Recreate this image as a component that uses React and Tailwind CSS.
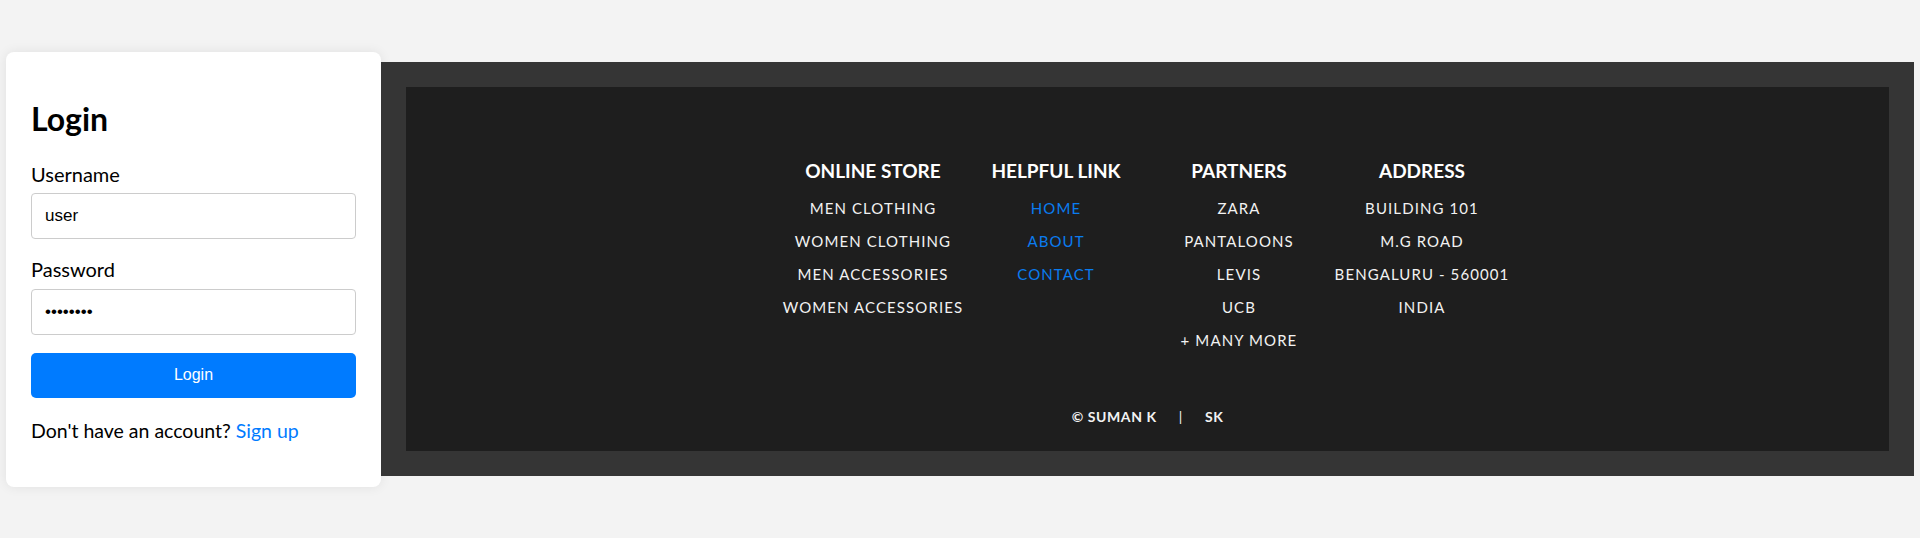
import { useState } from "react";

const columns = [
  {
    title: "ONLINE STORE",
    items: ["MEN CLOTHING", "WOMEN CLOTHING", "MEN ACCESSORIES", "WOMEN ACCESSORIES"],
  },
  { title: "HELPFUL LINK", items: ["HOME", "ABOUT", "CONTACT"], link: true },
  {
    title: "PARTNERS",
    items: ["ZARA", "PANTALOONS", "LEVIS", "UCB", "+ MANY MORE"],
  },
  {
    title: "ADDRESS",
    items: ["BUILDING 101", "M.G ROAD", "BENGALURU - 560001", "INDIA"],
  },
];

function LoginCard() {
  const [username, setUsername] = useState("user");
  const [password, setPassword] = useState("password");

  return (
    <div className="w-[375px] shrink-0 bg-white rounded-lg shadow-[0_0_12px_rgba(0,0,0,0.08)] px-[25px] pt-[48px] pb-[44px] text-black">
      <h2 className="text-[32px] leading-[38px] font-bold">Login</h2>
      <form className="mt-[24px]" onSubmit={(e) => e.preventDefault()}>
        <label className="block text-[20px] leading-[24px]">Username</label>
        <input
          value={username}
          onChange={(e) => setUsername(e.target.value)}
          className="mt-[7px] block w-full h-[46px] border border-[#cccccc] rounded-[4px] px-[13px] text-[17px] outline-none font-['Liberation_Sans',Arial,sans-serif]"
        />
        <label className="block mt-[18px] text-[20px] leading-[24px]">Password</label>
        <input
          type="password"
          value={password}
          onChange={(e) => setPassword(e.target.value)}
          className="mt-[8px] block w-full h-[46px] border border-[#cccccc] rounded-[4px] px-[13px] text-[17px] outline-none font-['Liberation_Sans',Arial,sans-serif]"
        />
        <button
          type="submit"
          className="mt-[18px] block w-full h-[45px] bg-[#007bff] text-white rounded-[5px] text-[16px] font-['Liberation_Sans',Arial,sans-serif]"
        >
          Login
        </button>
      </form>
      <p className="mt-[21px] text-[19.5px] leading-[24px]">
        Don't have an account? <a href="#" className="text-[#007bff]">Sign up</a>
      </p>
    </div>
  );
}

function Footer() {
  return (
    <footer className="flex-1 bg-[#353535] p-[25px]">
      <div className="bg-[#1e1e1e] pt-[72px] pb-[24px] text-white">
        <div className="flex justify-center">
          {columns.map((col) => (
            <div key={col.title} className="w-[183px] text-center">
              <h3 className="text-[19px] leading-[24px] font-bold">{col.title}</h3>
              <ul className="mt-[9px]">
                {col.items.map((item) => (
                  <li
                    key={item}
                    className={`text-[15px] leading-[33px] tracking-[1.1px] ${
                      col.link ? "text-[#0a7cf0]" : "text-[#f2f2f2]"
                    }`}
                  >
                    {item}
                  </li>
                ))}
              </ul>
            </div>
          ))}
        </div>
        <div className="mt-[50px] flex justify-center items-center gap-[22px] text-[14px] leading-[20px] font-bold tracking-[0.6px] text-[#f2f2f2]">
          <span>© SUMAN K</span>
          <span className="font-normal">|</span>
          <span>SK</span>
        </div>
      </div>
    </footer>
  );
}

export default function App() {
  return (
    <div className="min-h-screen bg-[#f3f3f3] flex items-center px-[6px] font-['Lato','Noto_Sans',sans-serif]">
      <LoginCard />
      <Footer />
    </div>
  );
}
